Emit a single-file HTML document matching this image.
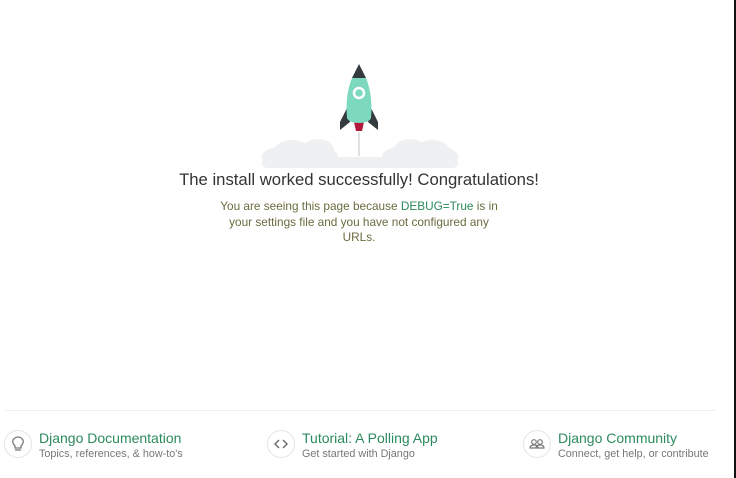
<!DOCTYPE html>
<html><head><style>
body{margin:0;width:736px;height:478px;background:#fff;font-family:"Liberation Sans",sans-serif;position:relative;overflow:hidden}
.bar{position:absolute;right:0;top:0;width:2px;height:478px;background:#111}
h1{position:absolute;top:170px;left:0;width:718px;text-align:center;margin:0;font-size:16.7px;font-weight:normal;color:#333}
.sub{position:absolute;top:199px;left:219px;width:280px;text-align:center;font-size:11.8px;line-height:15.5px;color:#6b6b3f}
.sub span{color:#2a8a5a}
.hr{position:absolute;top:410px;left:5px;width:711px;height:1px;background:#eee}
.it{position:absolute;top:430px}
.c{position:absolute;left:0;top:0;width:26px;height:26px;border:1px solid #e4e4e4;border-radius:50%}
.t{position:absolute;left:35px;top:0;font-size:14px;color:#2c8a5e;white-space:nowrap}
.s{position:absolute;left:35px;top:18px;font-size:10.8px;color:#777;white-space:nowrap}
</style></head><body>
<svg style="position:absolute;left:0;top:0" width="736" height="478">
<g fill="#eef0f2">
<ellipse cx="300" cy="156" rx="38" ry="12"/><ellipse cx="292" cy="151" rx="18" ry="11"/><ellipse cx="318" cy="150" rx="16" ry="11"/><ellipse cx="278" cy="158" rx="16" ry="10"/>
<ellipse cx="420" cy="156" rx="38" ry="12"/><ellipse cx="410" cy="150" rx="16" ry="11"/><ellipse cx="432" cy="151" rx="18" ry="11"/><ellipse cx="444" cy="158" rx="14" ry="10"/>
<rect x="262" y="157" width="196" height="11" rx="5"/>
</g>
<line x1="359" y1="132" x2="359" y2="156" stroke="#dfe1e4" stroke-width="2"/>
<path d="M354 122h10l-2 9h-6z" fill="#b2183c"/>
<path d="M348 106 L340 122 L340 130 L350 122 Z" fill="#353a3f"/>
<path d="M370 106 L378 122 L378 130 L368 122 Z" fill="#353a3f"/>
<path d="M359 64 L352 78 L366 78 Z" fill="#353a3f"/>
<path d="M352 78 Q345 95 347 118 Q349 123 359 123 Q369 123 371 118 Q373 95 366 78 Z" fill="#7dd9bd"/>
<circle cx="359" cy="93" r="5" fill="none" stroke="#fff" stroke-width="2.5"/>
</svg>
<h1>The install worked successfully! Congratulations!</h1>
<div class="sub">You are seeing this page because <span>DEBUG=True</span> is in your settings file and you have not configured any URLs.</div>
<div class="hr"></div>
<div class="it" style="left:4px"><div class="c"><svg width="26" height="26"><path d="M10 15 Q7 12 8 9 Q10 6 13 6 Q16 6 18 9 Q19 12 16 15 L16 17 L10 17 Z M10 19h6" fill="none" stroke="#777" stroke-width="1.3"/></svg></div><div class="t">Django Documentation</div><div class="s">Topics, references, &amp; how-to's</div></div>
<div class="it" style="left:267px"><div class="c"><svg width="26" height="26"><path d="M11 9l-4 4 4 4M15 9l4 4-4 4" fill="none" stroke="#666" stroke-width="1.4"/></svg></div><div class="t">Tutorial: A Polling App</div><div class="s">Get started with Django</div></div>
<div class="it" style="left:523px"><div class="c"><svg width="26" height="26"><g fill="none" stroke="#777" stroke-width="1.2"><circle cx="10" cy="11" r="2.3"/><circle cx="16" cy="11" r="2.3"/><path d="M6 17q0-3 4-3t4 3zM12 17q0-3 4-3t4 3z"/></g></svg></div><div class="t">Django Community</div><div class="s">Connect, get help, or contribute</div></div>
<div class="bar"></div>
</body></html>
